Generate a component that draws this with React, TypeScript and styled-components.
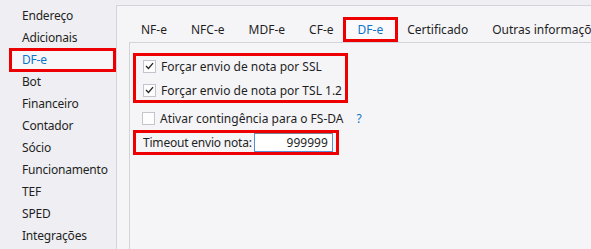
import { createGlobalStyle, styled } from 'styled-components'

const GlobalStyle = createGlobalStyle`
  html, body { margin: 0; padding: 0; }
  body {
    background: #efeff3;
    font-family: 'Segoe UI', 'Noto Sans', sans-serif;
    font-size: 12px;
    color: #1f1f1f;
  }
`

const red = '#ee0000'
const border = '#d3d3dc'
const blue = '#0a74cc'

const Window = styled.div`
  display: flex;
  width: 591px;
  height: 249px;
  overflow: hidden;
`

const Sidebar = styled.nav`
  width: 116px;
  flex-shrink: 0;
  padding-top: 5px;
  display: flex;
  flex-direction: column;
`

const NavItem = styled.div<{ $active?: boolean }>`
  height: 22px;
  line-height: 22px;
  padding-left: ${(p) => (p.$active ? '12px' : '22px')};
  margin: ${(p) => (p.$active ? '0 1px 0 10px' : '0')};
  white-space: nowrap;
  letter-spacing: -0.2px;
  color: ${(p) => (p.$active ? blue : 'inherit')};
  background: ${(p) => (p.$active ? '#f7f7fa' : 'transparent')};
  outline: ${(p) => (p.$active ? `3px solid ${red}` : 'none')};
  outline-offset: -2px;
`

const Panel = styled.main`
  flex: 1;
  margin-top: 5px;
  border-left: 1px solid ${border};
  border-top: 1px solid ${border};
  background: #f5f5f8;
  padding-left: 12px;
  display: flex;
  flex-direction: column;
  min-width: 0;
`

const TabBar = styled.div`
  display: flex;
  align-items: flex-end;
  height: 36px;
  white-space: nowrap;
`

const Tab = styled.div<{ $active?: boolean }>`
  height: 25px;
  line-height: 25px;
  padding: ${(p) => (p.$active ? '0 15px' : '0 12px')};
  margin: ${(p) => (p.$active ? '0 -3px' : '0')};
  position: relative;
  color: ${(p) => (p.$active ? blue : 'inherit')};
  background: ${(p) => (p.$active ? '#fafafc' : 'transparent')};
  outline: ${(p) => (p.$active ? `3px solid ${red}` : 'none')};
  outline-offset: -3px;
  z-index: ${(p) => (p.$active ? 1 : 0)};
`

const TabBody = styled.section`
  flex: 1;
  border-left: 1px solid ${border};
  border-top: 1px solid ${border};
  padding: 10px 0 0 3px;
  display: flex;
  flex-direction: column;
  align-items: flex-start;
`

const Highlight = styled.div<{ $gap?: number }>`
  border: 3px solid ${red};
  padding: 0 3px 0 7px;
  display: flex;
  flex-direction: column;
  gap: ${(p) => p.$gap ?? 0}px;
`

const CheckRow = styled.label<{ $indent?: number }>`
  display: flex;
  align-items: center;
  gap: 5px;
  height: 20px;
  padding-left: ${(p) => p.$indent ?? 0}px;
  white-space: nowrap;
`

const Box = styled.span`
  width: 13px;
  height: 13px;
  box-sizing: border-box;
  border: 1px solid #c4c4cc;
  background: #fdfdfe;
  display: flex;
  align-items: center;
  justify-content: center;
`

const Help = styled.span`
  color: ${blue};
  margin-left: 8px;
`

const Plain = styled.div`
  margin-top: 5px;
  margin-bottom: 2px;
`

const FieldRow = styled.div`
  display: flex;
  align-items: center;
  height: 19px;
  white-space: nowrap;
  gap: 2px;
  letter-spacing: -0.2px;
`

const Input = styled.div`
  width: 79px;
  height: 19px;
  box-sizing: border-box;
  border: 1px solid #5a8fd4;
  border-top-color: #7a7f88;
  background: #fff;
  text-align: right;
  line-height: 17px;
  padding-right: 4px;
  letter-spacing: 0;
`

function Check({ checked }: { checked?: boolean }) {
  return (
    <Box>
      {checked && (
        <svg width="9" height="8" viewBox="0 0 9 8">
          <path d="M1 4 L3.5 6.5 L8 1.2" fill="none" stroke="#222" strokeWidth="1.3" />
        </svg>
      )}
    </Box>
  )
}

const nav = ['Endereço', 'Adicionais', 'DF-e', 'Bot', 'Financeiro', 'Contador', 'Sócio', 'Funcionamento', 'TEF', 'SPED', 'Integrações']
const tabs = ['NF-e', 'NFC-e', 'MDF-e', 'CF-e', 'DF-e', 'Certificado', 'Outras informações']

export default function App() {
  return (
    <>
      <GlobalStyle />
      <Window>
        <Sidebar>
          {nav.map((n) => (
            <NavItem key={n} $active={n === 'DF-e'}>{n}</NavItem>
          ))}
        </Sidebar>
        <Panel>
          <TabBar>
            {tabs.map((t) => (
              <Tab key={t} $active={t === 'DF-e'}>{t}</Tab>
            ))}
          </TabBar>
          <TabBody>
            <Highlight $gap={4}>
              <CheckRow><Check checked />Forçar envio de nota por SSL</CheckRow>
              <CheckRow><Check checked />Forçar envio de nota por TSL 1.2</CheckRow>
            </Highlight>
            <Plain>
              <CheckRow $indent={9}><Check />Ativar contingência para o FS-DA<Help>?</Help></CheckRow>
            </Plain>
            <Highlight>
              <FieldRow>
                Timeout envio nota:
                <Input>999999</Input>
              </FieldRow>
            </Highlight>
          </TabBody>
        </Panel>
      </Window>
    </>
  )
}
